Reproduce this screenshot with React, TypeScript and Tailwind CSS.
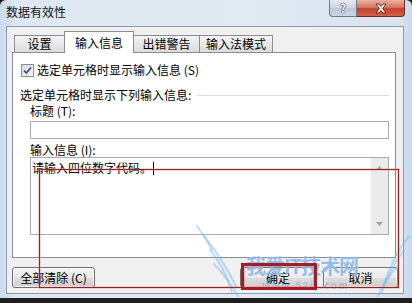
import React from "react";

const btn =
  "h-[21px] rounded-[3px] border border-[#707070] bg-[linear-gradient(to_bottom,#f2f2f2_0%,#ebebeb_50%,#dddddd_51%,#cfcfcf_100%)] flex items-center justify-center leading-[14px] shadow-[inset_0_0_0_1px_rgba(255,255,255,0.7)]";

const tabOff =
  "h-[17px] -ml-px border border-b-0 border-[#898c95] bg-[linear-gradient(to_bottom,#f4f4f4,#dcdcdc)] flex items-center justify-center leading-[14px]";

export default function App() {
  return (
    <div className="relative w-[412px] h-[303px] overflow-hidden bg-[#1e1e1e] font-['Noto_Sans_CJK_SC','Noto_Sans',sans-serif] text-[12px] text-black">
      <div className="h-[298px] flex flex-col rounded-t-[6px] bg-[linear-gradient(to_right,#c9dbee_0%,#dfe8f2_4%,#e2eaf3_60%,#d9e4f0_97%,#c6d9ee_100%)]">
        {/* title bar */}
        <div className="h-[26px] flex items-start justify-between">
          <span className="pl-[6px] pt-[5px] leading-[14px] text-[#111]">数据有效性</span>
          <div className="flex mr-[7px]">
            <div className="w-[28px] h-[17px] rounded-bl-[4px] border border-t-0 border-[#6f7b8b] bg-[linear-gradient(to_bottom,#e6ebf2,#cbd4e0_50%,#bcc8d8_51%,#cdd7e4)] flex items-center justify-center">
              <span className="text-white font-bold text-[12px] leading-[12px] [text-shadow:0_0_1px_#39414d,0_0_1px_#39414d,0_0_1px_#39414d]">?</span>
            </div>
            <div className="w-[48px] h-[17px] rounded-br-[4px] border border-t-0 border-l-0 border-[#6a2b22] bg-[linear-gradient(to_bottom,#eab0a2,#d47a66_45%,#c4402a_55%,#d2614b)] flex items-center justify-center">
              <svg width="14" height="11" viewBox="0 0 14 11">
                <path d="M2 1 L5 1 L7 3.5 L9 1 L12 1 L8.6 5.5 L12 10 L9 10 L7 7.5 L5 10 L2 10 L5.4 5.5 Z" fill="#fff" stroke="#5a1c14" strokeWidth="0.9" strokeLinejoin="round" />
              </svg>
            </div>
          </div>
        </div>
        {/* client area */}
        <div className="flex-1 ml-[6px] mr-[8px] mb-[4px] bg-[#f0f0f0] border border-[#8d9aab] flex flex-col pl-[5px] pt-[4px]">
          {/* tabs */}
          <div className="relative z-10 h-[21px] flex items-end pl-[2px]">
            <div className={`${tabOff} w-[51px] ml-0`}>设置</div>
            <div className="-ml-px w-[70px] h-[22px] -mb-px bg-white border border-b-0 border-[#898c95] flex items-start justify-center pt-[4px] leading-[14px]">
              输入信息
            </div>
            <div className={`${tabOff} w-[67px]`}>出错警告</div>
            <div className={`${tabOff} w-[74px]`}>输入法模式</div>
          </div>
          {/* panel */}
          <div className="w-[384px] h-[206px] bg-white border border-[#898c95] flex flex-col">
            <div className="mt-[9px] h-[16px] flex items-center pl-[8px]">
              <div className="w-[13px] h-[13px] border border-[#8e8f8f] bg-[linear-gradient(135deg,#d8dde4,#f6f7f9)] flex items-center justify-center">
                <svg width="9" height="9" viewBox="0 0 9 9">
                  <path d="M1 4.5 L3.4 7 L8 1.5" fill="none" stroke="#3b4f8a" strokeWidth="1.8" />
                </svg>
              </div>
              <span className="ml-[3px] leading-[14px]">选定单元格时显示输入信息 (S)</span>
            </div>
            <div className="mt-[10px] h-[14px] flex items-center pl-[7px]">
              <span className="leading-[14px]">选定单元格时显示下列输入信息:</span>
              <div className="flex-1 h-px bg-[#d5dde3] ml-[6px] mr-[5px]" />
            </div>
            <div className="mt-[2px] h-[14px] pl-[17px] leading-[14px]">标题 (T):</div>
            <div className="mt-[3px] ml-[17px] w-[359px] h-[18px] border border-[#a9abb0] bg-white" />
            <div className="mt-[4px] h-[14px] pl-[17px] leading-[14px]">输入信息 (I):</div>
            <div className="ml-[17px] w-[359px] h-[78px] border border-[#a9abb0] bg-white flex">
              <div className="flex-1 pl-[1px] pt-[3px] flex items-start">
                <span className="leading-[14px]">请输入四位数字代码。</span>
                <span className="ml-[1px] w-px h-[13px] bg-black mt-[1px]" />
              </div>
              <div className="w-[17px] bg-[#ebebeb] flex flex-col items-center justify-between py-[8px]">
                <svg width="7" height="4" viewBox="0 0 7 4"><path d="M0 4 L3.5 0 L7 4 Z" fill="#a0a0a0" /></svg>
                <svg width="7" height="4" viewBox="0 0 7 4"><path d="M0 0 L3.5 4 L7 0 Z" fill="#a0a0a0" /></svg>
              </div>
            </div>
          </div>
          {/* buttons */}
          <div className="mt-[9px] flex">
            <div className={`${btn} w-[83px]`}>全部清除 (C)</div>
            <div className={`${btn} w-[76px] ml-[145px]`}>确定</div>
            <div className={`${btn} w-[75px] ml-[7px]`}>取消</div>
          </div>
        </div>
      </div>

      {/* watermark */}
      <svg className="absolute inset-0 pointer-events-none" width="412" height="303" viewBox="0 0 412 303">
        <g fill="none" stroke="#6fb6f2" strokeOpacity="0.45" strokeWidth="2" strokeLinecap="round">
          <path d="M197 226 Q 206 238 212 250" />
          <path d="M204 236 Q 222 258 236 286" />
          <path d="M210 250 Q 224 266 232 292" />
          <path d="M214 264 Q 226 276 238 296" />
          <path d="M409 236 Q 392 258 384 284" />
          <path d="M404 250 Q 390 268 382 292" />
          <path d="M398 266 Q 386 278 378 296" />
        </g>
      </svg>
      <div className="absolute left-[246px] top-[253px] pointer-events-none text-[20px] leading-[26px] font-bold text-[#3587dc]/55 tracking-[-1px] [text-shadow:0_0_1px_rgba(255,255,255,0.9)]">
        我爱IT技术网
      </div>
      <div className="absolute left-[262px] top-[281px] pointer-events-none text-[9px] leading-[10px] font-bold tracking-[2px] text-[#3587dc]/35">
        www.52ij.com
      </div>

      {/* red annotation frames */}
      <div className="absolute left-[39px] top-[169px] w-[360px] h-[119px] border border-[#8a2727] shadow-[0_0_0_1px_rgba(240,140,140,0.35),inset_0_0_0_1px_rgba(240,140,140,0.35)] pointer-events-none" />
      <div className="absolute left-[241px] top-[263px] w-[76px] h-[27px] border-[3px] border-[#a11d2b] shadow-[inset_0_0_0_1px_rgba(230,120,120,0.5)] pointer-events-none" />
    </div>
  );
}
